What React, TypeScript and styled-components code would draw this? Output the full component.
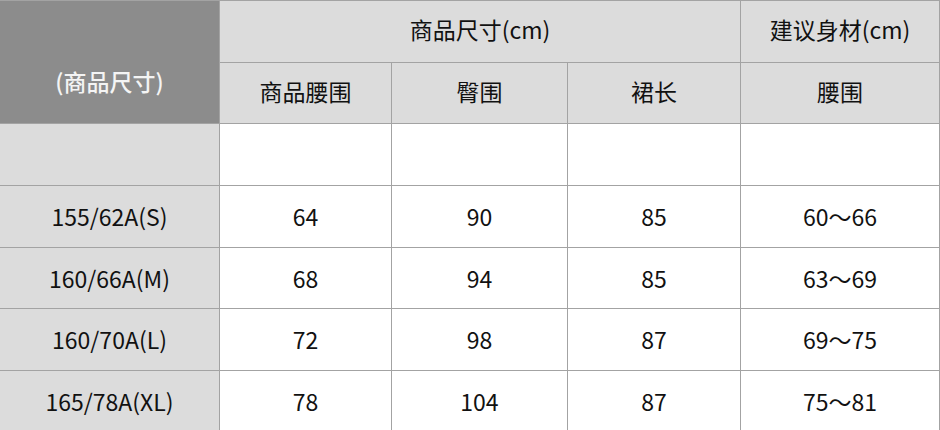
import styled, { createGlobalStyle } from 'styled-components';

const GlobalStyle = createGlobalStyle`
  html, body {
    margin: 0;
    padding: 0;
    background: #ffffff;
    overflow: hidden;
  }
  body {
    font-family: "Noto Sans CJK SC", "Noto Sans", sans-serif;
  }
`;

interface IRow {
  size: string;
  waist: string;
  hip: string;
  length: string;
  body: string;
}

const rows: IRow[] = [
  { size: '155/62A(S)', waist: '64', hip: '90', length: '85', body: '60～66' },
  { size: '160/66A(M)', waist: '68', hip: '94', length: '85', body: '63～69' },
  { size: '160/70A(L)', waist: '72', hip: '98', length: '87', body: '69～75' },
  { size: '165/78A(XL)', waist: '78', hip: '104', length: '87', body: '75～81' }
];

export default function App() {
  return (
    <>
      <GlobalStyle />
      <Table>
        <Corner>(商品尺寸)</Corner>
        <Cell $tone="head" $span={3}>
          商品尺寸(cm)
        </Cell>
        <Cell $tone="head">建议身材(cm)</Cell>
        <Cell $tone="head">商品腰围</Cell>
        <Cell $tone="head">臀围</Cell>
        <Cell $tone="head">裙长</Cell>
        <Cell $tone="head">腰围</Cell>

        <Cell $tone="side" />
        <Cell />
        <Cell />
        <Cell />
        <Cell />

        {rows.map((row) => (
          <Row key={row.size}>
            <Cell $tone="side">{row.size}</Cell>
            <Cell>{row.waist}</Cell>
            <Cell>{row.hip}</Cell>
            <Cell>{row.length}</Cell>
            <Cell>{row.body}</Cell>
          </Row>
        ))}
      </Table>
    </>
  );
}

const Row = styled.div`
  display: contents;
`;

const Table = styled.div`
  display: grid;
  grid-template-columns: 219px 171px 175px 172px 198px;
  grid-template-rows: repeat(7, 60.7px);
  gap: 1px;
  padding: 1px 1px 0 0;
  width: 940px;
  box-sizing: border-box;
  background: #a3a3a3;
`;

const Cell = styled.div<{ $tone?: 'head' | 'side'; $span?: number }>`
  display: flex;
  align-items: center;
  justify-content: center;
  grid-column: span ${(p) => p.$span ?? 1};
  padding-bottom: ${(p) => (p.$tone === 'head' ? '4px' : '0')};
  box-sizing: border-box;
  background: ${(p) => (p.$tone ? '#dcdcdc' : '#ffffff')};
  color: #111111;
  font-size: 23px;
  line-height: 1;
`;

const Corner = styled.div`
  grid-row: span 2;
  display: flex;
  align-items: center;
  justify-content: center;
  padding-top: 38px;
  box-sizing: border-box;
  background: #8c8c8c;
  color: #f4f4f4;
  font-size: 23px;
  font-weight: 500;
  line-height: 1;
`;
